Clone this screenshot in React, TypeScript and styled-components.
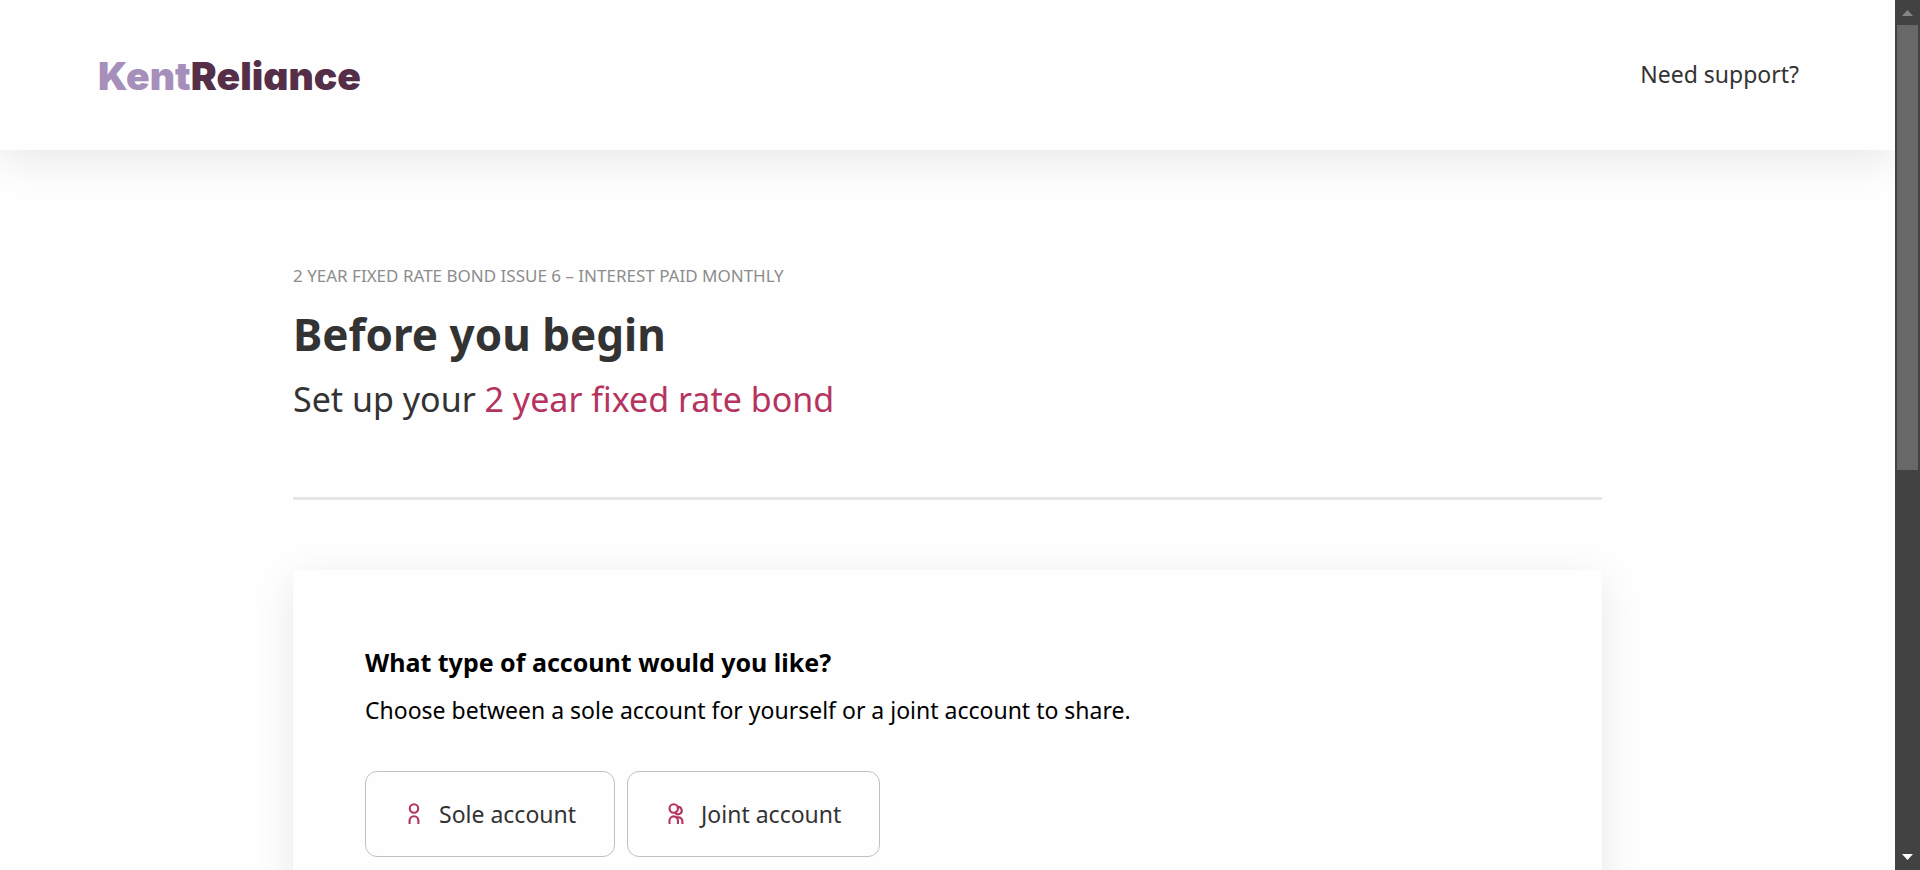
import React, { useState } from 'react';
import styled, { createGlobalStyle } from 'styled-components';

const accent = '#b5345f';
const ink = '#333333';
const surface = '#fefefe';
const softShadow = '0 10px 40px rgba(0, 0, 0, 0.09)';

const GlobalStyle = createGlobalStyle`
  * { box-sizing: border-box; }
  body {
    margin: 0;
    background: ${surface};
    color: ${ink};
    font-family: "Noto Sans", "Open Sans", sans-serif;
  }
  h1, h2, p { margin: 0; }
`;

const Window = styled.div`
  display: flex;
  height: 100vh;
  overflow: hidden;
`;

const Page = styled.div`
  flex: 1;
  min-width: 0;
  overflow: hidden;
`;

const Header = styled.header`
  display: flex;
  align-items: center;
  justify-content: space-between;
  height: 150px;
  padding: 0 96px 0 98px;
  background: ${surface};
  box-shadow: ${softShadow};
`;

const Logo = styled.a`
  padding-top: 2px;
  color: #552f47;
  font: 900 39px/48px Inter, sans-serif;
  font-feature-settings: "cv11";
  text-decoration: none;
`;

const LogoLight = styled.span`
  color: #a68fba;
`;

const SupportLink = styled.a`
  padding-bottom: 2px;
  color: ${ink};
  font-size: 23px;
  line-height: 36px;
  text-decoration: none;
`;

const Content = styled.main`
  width: 100%;
  max-width: 1309px;
  margin: 0 auto;
  padding-top: 114px;
`;

const Intro = styled.section`
  padding-bottom: 74px;
  border-bottom: 3px solid #e6e6e6;
`;

const Eyebrow = styled.p`
  color: #8c8c8c;
  font-size: 17px;
  line-height: 24px;
  text-transform: uppercase;
`;

const Title = styled.h1`
  margin-top: 16px;
  font-size: 44px;
  font-weight: 700;
  line-height: 60px;
`;

const Subtitle = styled.p`
  margin-top: 11px;
  font-size: 34px;
  line-height: 48px;
`;

const Highlight = styled.span`
  color: ${accent};
`;

const Card = styled.section`
  margin-top: 70px;
  padding: 74px 72px;
  border-radius: 6px;
  background: ${surface};
  box-shadow: ${softShadow};
  color: #000000;
`;

const Question = styled.h2`
  font-size: 25px;
  font-weight: 700;
  line-height: 36px;
`;

const Hint = styled.p`
  margin-top: 12px;
  font-size: 23px;
  line-height: 36px;
`;

const Choices = styled.div`
  display: flex;
  gap: 12px;
  margin-top: 43px;
`;

const Choice = styled.button`
  display: flex;
  align-items: center;
  gap: 13px;
  height: 86px;
  padding: 0 38px 0 36px;
  border: 1px solid #c0c0c0;
  border-radius: 12px;
  background: ${surface};
  color: ${ink};
  font: 400 23px/36px "Noto Sans", "Open Sans", sans-serif;
  cursor: pointer;
`;

const PersonIcon = styled.svg`
  width: 24px;
  height: 24px;
  fill: none;
  stroke: ${accent};
  stroke-width: 2.1;
`;

const ScrollTrack = styled.div`
  display: flex;
  flex-direction: column;
  width: 25px;
  background: #424242;
`;

const ScrollArrow = styled.svg`
  width: 25px;
  height: 25px;
`;

const ScrollRail = styled.div`
  flex: 1;
  padding: 0 2px;
`;

const ScrollThumb = styled.div`
  height: 54.3%;
  background: #686868;
`;

export default function App() {
  const [account, setAccount] = useState('');

  return (
    <>
      <GlobalStyle />
      <Window>
        <Page>
          <Header>
            <Logo href="#home">
              <LogoLight>Kent</LogoLight>Reliance
            </Logo>
            <SupportLink href="#support">Need support?</SupportLink>
          </Header>
          <Content>
            <Intro>
              <Eyebrow>2 Year Fixed Rate Bond Issue 6 – Interest Paid Monthly</Eyebrow>
              <Title>Before you begin</Title>
              <Subtitle>
                Set up your <Highlight>2 year fixed rate bond</Highlight>
              </Subtitle>
            </Intro>
            <Card>
              <Question>What type of account would you like?</Question>
              <Hint>Choose between a sole account for yourself or a joint account to share.</Hint>
              <Choices>
                <Choice type="button" aria-pressed={account === 'sole'} onClick={() => setAccount('sole')}>
                  <PersonIcon viewBox="0 0 24 24" aria-hidden="true">
                    <circle cx="12" cy="6.500" r="4.200" />
                    <path d="M7.600 22v-3.400a4.400 4.400 0 0 1 8.800 0V22" />
                  </PersonIcon>
                  Sole account
                </Choice>
                <Choice type="button" aria-pressed={account === 'joint'} onClick={() => setAccount('joint')}>
                  <PersonIcon viewBox="0 0 24 24" aria-hidden="true">
                    <circle cx="9.700" cy="6.500" r="4.200" />
                    <path d="M13.600 4.900a3.700 3.700 0 1 1-2.500 5.900" />
                    <path d="M5.500 22v-3.400a4.200 4.200 0 0 1 8.400 0V22" />
                    <path d="M11.600 15.400h2.800a4 4 0 0 1 4 4V22" />
                  </PersonIcon>
                  Joint account
                </Choice>
              </Choices>
            </Card>
          </Content>
        </Page>
        <ScrollTrack aria-hidden="true">
          <ScrollArrow viewBox="0 0 25 25">
            <path d="M7 16l5.500-6 5.500 6z" fill="#868686" />
          </ScrollArrow>
          <ScrollRail>
            <ScrollThumb />
          </ScrollRail>
          <ScrollArrow viewBox="0 0 25 25">
            <path d="M7 9l5.500 6 5.500-6z" fill="#ffffff" />
          </ScrollArrow>
        </ScrollTrack>
      </Window>
    </>
  );
}
